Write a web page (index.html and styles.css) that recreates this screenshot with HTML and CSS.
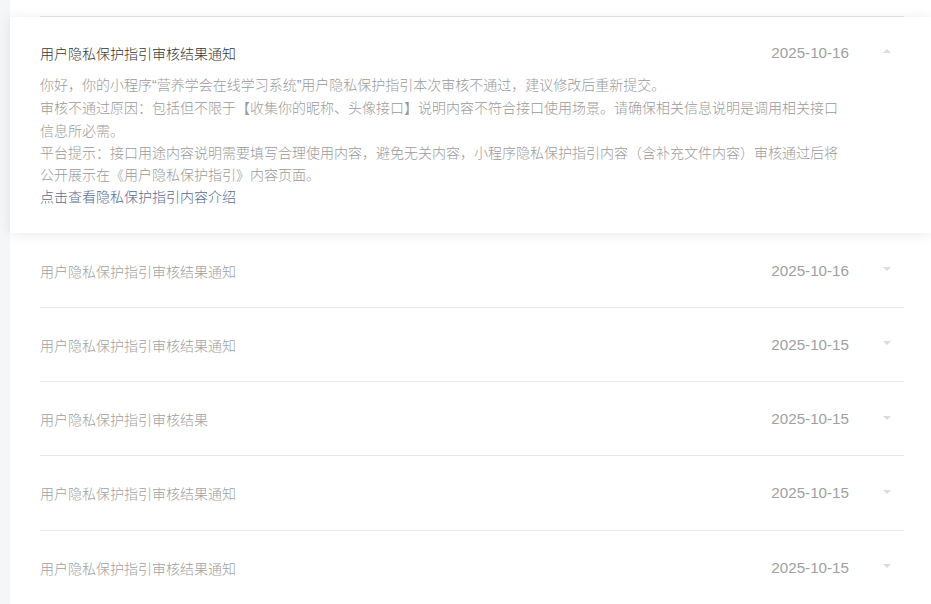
FILE: index.html
```html
<!DOCTYPE html>
<html lang="zh-CN">
<head>
<meta charset="utf-8">
<title>消息列表</title>
<link rel="stylesheet" href="styles.css">
</head>
<body>
<div class="page">
  <div class="side"></div>
  <div class="panel">
    <div class="item item-cut"><div class="row"></div></div>

    <div class="card">
      <div class="card-head">
        <span class="title title-dark">用户隐私保护指引审核结果通知</span>
        <span class="date">2025-10-16</span>
        <span class="arrow arrow-up"></span>
      </div>
      <div class="card-body">
        <p>你好，你的小程序<span class="q">“</span>营养学会在线学习系统<span class="q">”</span>用户隐私保护指引本次审核不通过，建议修改后重新提交。</p>
        <p>审核不通过原因：包括但不限于【收集你的昵称、头像接口】说明内容不符合接口使用场景。请确保相关信息说明是调用相关接口信息所必需。</p>
        <p>平台提示：接口用途内容说明需要填写合理使用内容，避免无关内容，小程序隐私保护指引内容（含补充文件内容）审核通过后将公开展示在《用户隐私保护指引》内容页面。</p>
        <a class="link" href="#">点击查看隐私保护指引内容介绍</a>
      </div>
    </div>

    <div class="item"><div class="row">
      <span class="title">用户隐私保护指引审核结果通知</span>
      <span class="date">2025-10-16</span>
      <span class="arrow arrow-down"></span>
    </div></div>
    <div class="item"><div class="row">
      <span class="title">用户隐私保护指引审核结果通知</span>
      <span class="date">2025-10-15</span>
      <span class="arrow arrow-down"></span>
    </div></div>
    <div class="item"><div class="row">
      <span class="title">用户隐私保护指引审核结果</span>
      <span class="date">2025-10-15</span>
      <span class="arrow arrow-down"></span>
    </div></div>
    <div class="item"><div class="row">
      <span class="title">用户隐私保护指引审核结果通知</span>
      <span class="date">2025-10-15</span>
      <span class="arrow arrow-down"></span>
    </div></div>
    <div class="item"><div class="row">
      <span class="title">用户隐私保护指引审核结果通知</span>
      <span class="date">2025-10-15</span>
      <span class="arrow arrow-down"></span>
    </div></div>
  </div>
</div>
</body>
</html>
```
FILE: styles.css
```css
html, body {
  margin: 0;
  padding: 0;
  height: 100%;
  overflow: hidden;
  background: #ffffff;
}
body {
  font-family: "Noto Sans CJK SC", "Noto Sans", sans-serif;
  font-size: 14px;
  font-weight: 300;
  color: #9a9a9a;
}
.page {
  display: flex;
  min-height: 604px;
}
.side {
  width: 10px;
  flex: none;
  background: #f5f6f8;
}
.panel {
  flex: 1;
  background: #ffffff;
  min-width: 0;
}
.item {
  padding: 0 27px 0 30px;
}
.row {
  display: flex;
  align-items: center;
  height: 72.3px;
  padding-top: 1px;
  border-bottom: 1px solid #e7e7e7;
  line-height: 20px;
}
.item-cut .row {
  height: 16px;
  padding-top: 0;
}
.title {
  flex: 1;
  color: #a0a0a0;
  white-space: nowrap;
}
.title-dark {
  color: #353535;
}
.date {
  font-family: "Liberation Sans", "Noto Sans", sans-serif;
  font-weight: 400;
  font-size: 15.2px;
  color: #a0a0a0;
  margin-right: 1px;
}
.arrow {
  width: 0;
  height: 0;
  margin-left: 33px;
  margin-right: 13px;
  border-left: 4.5px solid transparent;
  border-right: 4.5px solid transparent;
}
.arrow-up {
  border-bottom: 4px solid #dcdcdc;
  margin-top: -3px;
}
.arrow-down {
  border-top: 4px solid #dcdcdc;
  margin-top: -3px;
}
.card {
  position: relative;
  background: #ffffff;
  box-shadow: 0 1px 12px rgba(0, 0, 0, 0.09);
  padding: 25.5px 27px 26px 30px;
  z-index: 1;
}
.card-head {
  display: flex;
  align-items: center;
  line-height: 20px;
}
.card-body {
  margin-top: 10.7px;
  width: 805px;
  line-height: 22.2px;
  color: #9a9a9a;
}
.card-body p {
  margin: 0;
}
.q {
  font-family: "Liberation Sans", sans-serif;
}
.link {
  color: #576b95;
  text-decoration: none;
}
```
